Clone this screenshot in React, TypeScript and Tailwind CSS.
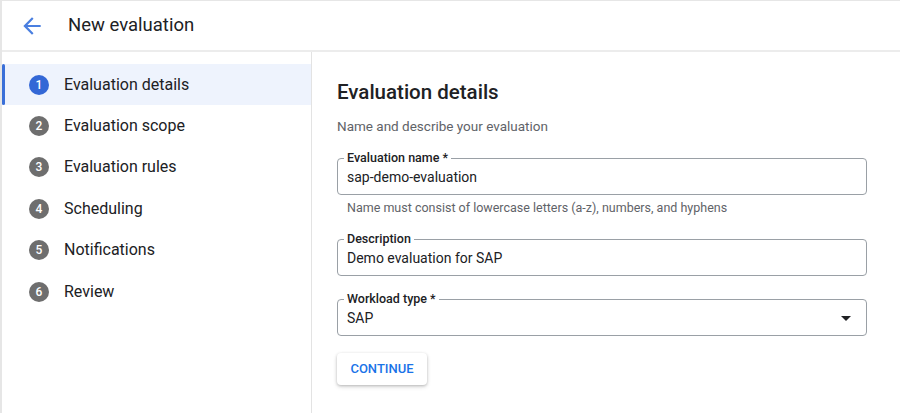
import { useState } from "react";

const STEPS = [
  "Evaluation details",
  "Evaluation scope",
  "Evaluation rules",
  "Scheduling",
  "Notifications",
  "Review",
];

function OutlinedField({
  label,
  value,
  select,
}: {
  label: string;
  value: string;
  select?: boolean;
}) {
  return (
    <fieldset className="border border-[#9aa0a6] rounded-[4px] px-[9px] pb-[7px] m-0 min-w-0">
      <legend className="ml-[-3px] px-[3px] text-[12.5px] leading-[14px] font-medium text-[#202124]">
        {label}
      </legend>
      <div className="flex items-center h-[20px] mt-[2px]">
        <span className="flex-1 text-[14px] text-[#202124]">{value}</span>
        {select && (
          <svg width="10" height="5" viewBox="0 0 10 5" className="mr-[6px]">
            <path d="M0 0h10L5 5z" fill="#202124" />
          </svg>
        )}
      </div>
    </fieldset>
  );
}

export default function App() {
  const [active] = useState(0);

  return (
    <div
      className="w-[900px] h-[413px] bg-white border-t border-l-2 border-[#e6e6e6] overflow-hidden flex flex-col"
      style={{ fontFamily: "Roboto, 'Liberation Sans', sans-serif" }}
    >
      {/* Header */}
      <div className="h-[51px] shrink-0 flex items-center border-b-2 border-[#ececec]">
        <button className="ml-[16px] w-[28px] h-[28px] flex items-center justify-center">
          <svg width="26" height="26" viewBox="0 0 24 24">
            <path
              d="M20 11H7.83l5.59-5.59L12 4l-8 8 8 8 1.41-1.41L7.83 13H20v-2z"
              fill="#4a7fe0"
            />
          </svg>
        </button>
        <h1 className="ml-[22px] mt-[1px] text-[18.5px] text-[#202124]">New evaluation</h1>
      </div>

      <div className="flex flex-1 min-h-0">
        {/* Steps */}
        <div className="w-[310px] shrink-0 border-r border-[#e3e3e3] pt-[12px]">
          {STEPS.map((s, i) => (
            <div
              key={s}
              className={`relative h-[41.4px] flex items-center ${
                i === active ? "bg-[#eef3fd]" : ""
              }`}
            >
              {i === active && (
                <span className="absolute left-0 top-0 bottom-0 w-[3px] rounded-[2px] bg-[#3a6fd8]" />
              )}
              <span
                className={`ml-[27px] w-[20px] h-[20px] rounded-full flex items-center justify-center text-[12px] font-medium text-white ${
                  i === active ? "bg-[#3367d6]" : "bg-[#6e6e6e]"
                }`}
              >
                {i + 1}
              </span>
              <span className="ml-[15px] text-[16px] text-[#202124]">{s}</span>
            </div>
          ))}
        </div>

        {/* Form */}
        <div className="flex-1 pl-[25px] pr-[33px] pt-[27px]">
          <h2 className="text-[20.5px] leading-[26px] font-medium text-[#202124]">
            Evaluation details
          </h2>
          <p className="mt-[13px] text-[13.5px] leading-[16px] text-[#5f6368]">
            Name and describe your evaluation
          </p>

          <div className="mt-[17px]">
            <OutlinedField label="Evaluation name *" value="sap-demo-evaluation" />
            <p className="mt-[5px] ml-[10px] text-[12.5px] leading-[16px] text-[#5f6368]">
              Name must consist of lowercase letters (a-z), numbers, and hyphens
            </p>
          </div>

          <div className="mt-[16px]">
            <OutlinedField label="Description" value="Demo evaluation for SAP" />
          </div>

          <div className="mt-[16px]">
            <OutlinedField label="Workload type *" value="SAP" select />
          </div>

          <button className="mt-[17px] w-[90px] h-[32px] rounded-[4px] bg-white shadow-[0_1px_3px_rgba(0,0,0,0.22),0_2px_5px_rgba(0,0,0,0.1)] text-[13px] font-medium text-[#1a73e8]">
            CONTINUE
          </button>
        </div>
      </div>
    </div>
  );
}
